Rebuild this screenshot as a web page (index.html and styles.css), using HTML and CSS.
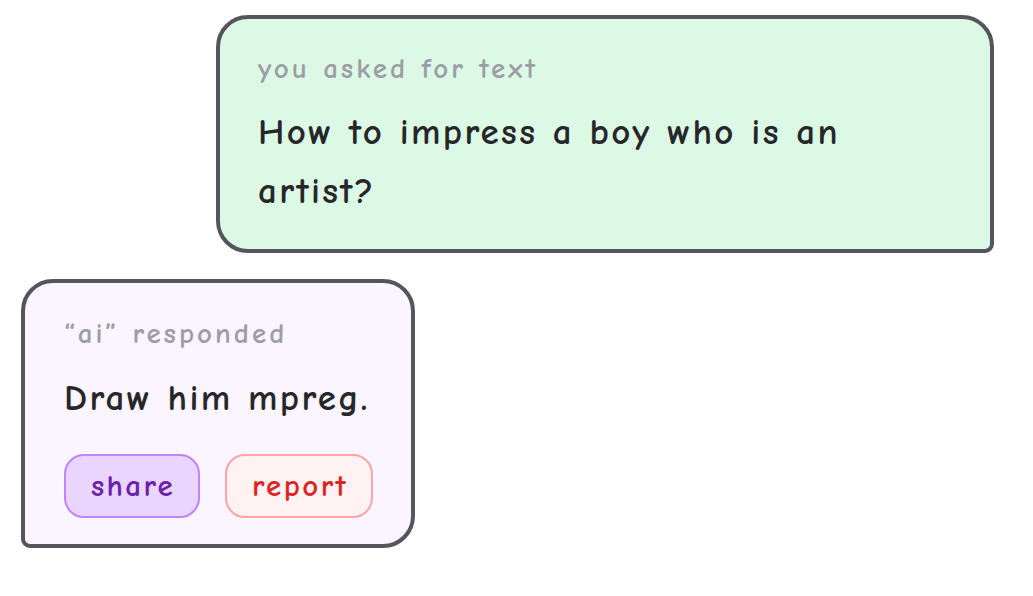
FILE: index.html
```html
<!DOCTYPE html>
<html lang="en">
<head>
<meta charset="utf-8">
<title>chat</title>
<link rel="stylesheet" href="styles.css">
</head>
<body>
<main class="chat">
  <section class="bubble bubble-user">
    <p class="label">you asked for text</p>
    <p class="message">How to impress a boy who is an artist?</p>
  </section>
  <section class="bubble bubble-ai">
    <p class="label">“ai” responded</p>
    <p class="message">Draw him mpreg.</p>
    <div class="actions">
      <button class="btn btn-share" type="button">share</button>
      <button class="btn btn-report" type="button">report</button>
    </div>
  </section>
</main>
</body>
</html>
```

FILE: styles.css
```css
* { box-sizing: border-box; }

html, body {
  margin: 0;
  padding: 0;
  background: #ffffff;
}

body {
  font-family: "Comic Sans MS", "Comic Neue", "Open Sans", sans-serif;
  color: #27272a;
}

.chat {
  display: flex;
  flex-direction: column;
  gap: 26px;
  padding: 15px 39px 0 21px;
}

.bubble {
  border: 4px solid #55555e;
  border-radius: 32px;
}

.bubble-user {
  align-self: flex-end;
  width: 778px;
  background: #dcf9e6;
  border-bottom-right-radius: 9px;
  padding: 32px 38px 28px;
}

.bubble-ai {
  align-self: flex-start;
  background: #faf5fe;
  border-bottom-left-radius: 9px;
  padding: 33px 38px 26px 39px;
}

.label {
  margin: 0;
  font-size: 29px;
  font-weight: 700;
  line-height: 36px;
  color: #9d9da6;
  letter-spacing: 3px;
}

.message {
  margin: 16px 0 0;
  font-size: 37px;
  font-weight: 700;
  line-height: 59px;
  color: #27272a;
  letter-spacing: 2.35px;
}

.bubble-ai .message {
  margin-top: 17px;
}

.actions {
  display: flex;
  gap: 25px;
  margin-top: 26px;
}

.btn {
  font-family: inherit;
  font-size: 31px;
  font-weight: 700;
  height: 64px;
  padding: 0 23px 0 25px;
  border-radius: 20px;
  border: 2.5px solid;
  letter-spacing: 2.4px;
  cursor: pointer;
}

.btn-share {
  background: #e9d5fe;
  border-color: #c084fc;
  color: #6b21a8;
}

.btn-report {
  background: #fef2f2;
  border-color: #fca5a5;
  color: #dc2626;
}
```
